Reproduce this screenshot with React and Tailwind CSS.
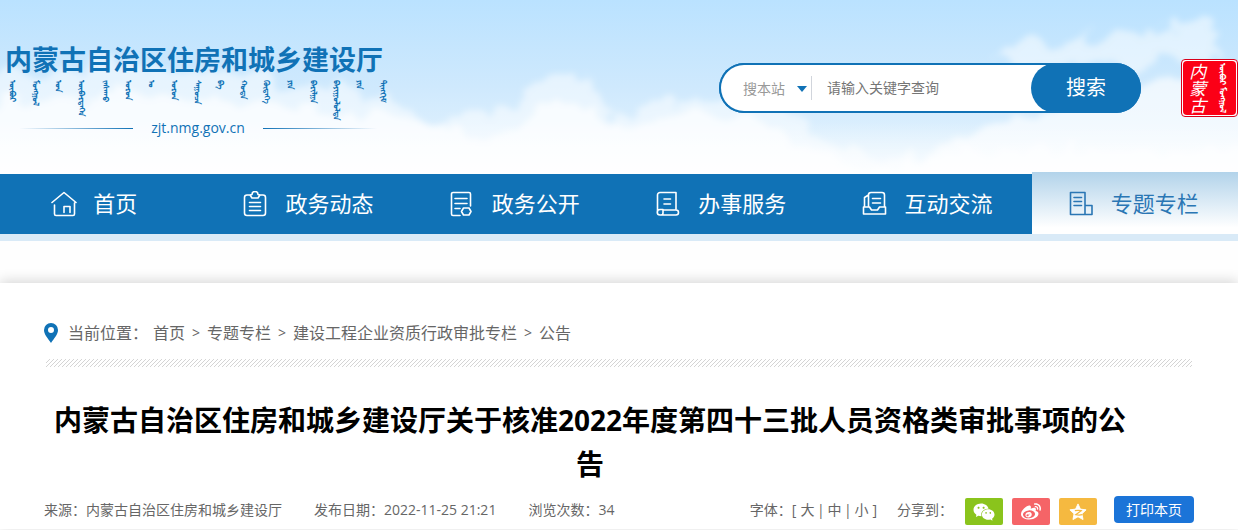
import React, { useState } from 'react';
import { FaWeibo } from 'react-icons/fa';
import { AiFillWechat } from 'react-icons/ai';

const MONGOLIAN_NAME = [
  'ᠥᠪᠥᠷ', 'ᠮᠣᠩᠭᠣᠯ', 'ᠤᠨ', 'ᠥᠪᠡᠷᠲᠡᠭᠡᠨ', 'ᠵᠠᠰᠠᠬᠤ', 'ᠣᠷᠣᠨ', 'ᠤ', 'ᠣᠷᠣᠨ', 'ᠰᠠᠭᠤᠴᠠ',
  'ᠪᠠ', 'ᠬᠣᠲᠠ', 'ᠬᠥᠳᠡᠭᠡ', 'ᠶᠢᠨ', 'ᠪᠠᠷᠢᠯᠭᠠ', 'ᠪᠠᠶᠢᠭᠤᠯᠤᠯᠲᠠ', 'ᠶᠢᠨ', 'ᠲᠢᠩᠬᠢᠮ',
];

function NavIcon({ children }) {
  return (
    <svg viewBox="0 0 26 26" className="h-[26px] w-[26px] shrink-0" fill="none" stroke="currentColor" strokeWidth="1.6" strokeLinejoin="round" strokeLinecap="round">
      {children}
    </svg>
  );
}

const NAV_ITEMS = [
  {
    label: '首页',
    icon: <path d="M1 11.5 13 1.5l12 10M3.5 14v9a1.5 1.5 0 0 0 1.5 1.5h17a1.5 1.5 0 0 0 1.5-1.5V12M13 21.5v-6h6v6" />,
  },
  {
    label: '政务动态',
    icon: <path d="M7 4H4a2.5 2.5 0 0 0-2.5 2.5V22A2.5 2.5 0 0 0 4 24.5h16a2.5 2.5 0 0 0 2.5-2.5V6.5A2.5 2.5 0 0 0 20 4h-3M7 4l2 3h6l2-3-2-.5a3 3 0 0 0-6 0zM6.5 11.5h11M6.5 15.5h11M6.5 19.5h11" />,
  },
  {
    label: '政务公开',
    icon: (
      <>
        <path d="M10 24.5H3A1.5 1.5 0 0 1 1.5 23V3A1.5 1.5 0 0 1 3 1.5h16A1.5 1.5 0 0 1 20.5 3v12M5 7.5h12M5 12.5h12M5 17.5h5" />
        <path d="M13.5 17h5.5l2 3.500-2 3.500h-5.500l-2-3.500z" />
      </>
    ),
  },
  {
    label: '办事服务',
    icon: <path d="M1.500 21V4A2.500 2.500 0 0 1 4 1.500h16V18M8 8h6.500M8 13h6.500M4 18.500h3V22a2 2 0 0 1-2 2H4a2.500 2.500 0 0 1 0-5.500M7 19h13a2.500 2.500 0 0 1 0 5H4" />,
  },
  {
    label: '互动交流',
    icon: <path d="M6.500 16V4A2.500 2.500 0 0 1 9 1.500h11A2.500 2.500 0 0 1 22.500 4v12M2.500 16V6.500l4-2.500M10.500 7.500h8M10.500 12h8M1.500 16h6l2 3h6l2-3h6v7h-22z" />,
  },
  {
    label: '专题专栏',
    active: true,
    icon: <path d="M16 23.500H1.500v-22H16v22h7v-9h-7M5 6.500h7.500M5 10.500h7.500M5 14.500h7.500" />,
  },
];

const CRUMBS = ['首页', '专题专栏', '建设工程企业资质行政审批专栏', '公告'];

function Sky() {
  return (
    <svg className="absolute inset-0 h-full w-full" viewBox="0 0 1238 174" preserveAspectRatio="none" aria-hidden="true">
      <defs>
        <linearGradient id="sky" x1="0" y1="0" x2="0" y2="1">
          <stop offset="0" stopColor="#bae2ff" />
          <stop offset="0.5" stopColor="#cfe9fd" />
          <stop offset="1" stopColor="#e8f5fe" />
        </linearGradient>
        <linearGradient id="haze" x1="0" y1="0" x2="0" y2="1">
          <stop offset="0.7" stopColor="#fff" stopOpacity="0" />
          <stop offset="1" stopColor="#fff" stopOpacity="0.8" />
        </linearGradient>
        <filter id="puff" x="-10%" y="-30%" width="120%" height="160%">
          <feTurbulence type="fractalNoise" baseFrequency="0.04" numOctaves="4" seed="3" result="n" />
          <feDisplacementMap in="SourceGraphic" in2="n" scale="34" xChannelSelector="R" yChannelSelector="G" />
          <feGaussianBlur stdDeviation="3" />
        </filter>
      </defs>
      <rect width="1238" height="174" fill="url(#sky)" />
      <g filter="url(#puff)" fill="#fff">
        <path fillOpacity="0.5" d="M-20 72 60 76 110 52 150 74 230 68 300 86 390 98 430 122 510 106 530 92 550 76 575 74 595 86 615 118 650 102 680 98 720 100 790 112 830 140 880 162 960 150 1260 150V200H-20z" />
        <path fillOpacity="0.65" d="M-20 104 120 94 300 108 400 116 500 138 550 104 580 104 620 130 680 112 760 120 820 152 900 174 940 146 990 124 1060 112 1120 92 1150 84 1185 80 1260 76V200H-20z" />
        <path fillOpacity="0.5" d="M990 62 1010 48 1030 42 1050 50 1080 36 1130 34 1170 24 1200 14 1214 24 1216 50 1180 60 1120 68 1040 66z" />
      </g>
      <rect width="1238" height="174" fill="url(#haze)" />
    </svg>
  );
}

function Logo() {
  return (
    <div className="w-[390px] text-[#1072b6]">
      <h1 className="pl-0.5 text-[27px] leading-9 font-bold">
        <a href="#home">内蒙古自治区住房和城乡建设厅</a>
      </h1>
      <div className="mt-0.5 flex h-9 items-start justify-between px-1 text-[8px] leading-3 font-bold" lang="mn-Mong">
        {MONGOLIAN_NAME.map((word, i) => (
          <span key={i} className="[writing-mode:vertical-lr]">{word}</span>
        ))}
      </div>
      <div className="flex items-center gap-[18px] px-4 text-sm leading-6">
        <span className="h-px flex-1 bg-linear-to-r from-transparent to-[#1072b6]" />
        <span>zjt.nmg.gov.cn</span>
        <span className="h-px flex-1 bg-linear-to-l from-transparent to-[#1072b6]" />
      </div>
    </div>
  );
}

function SearchForm() {
  const [keyword, setKeyword] = useState('');

  return (
    <form onSubmit={(e) => e.preventDefault()} className="flex h-[50px] w-[422px] items-stretch rounded-full bg-[#1072b6]">
      <div className="-mr-6 flex flex-1 items-center rounded-l-full border-2 border-r-0 border-[#1072b6] bg-white pl-[22px]">
        <div className="relative h-6 border-r border-gray-300">
          <select aria-label="搜索范围" className="h-6 w-[68px] appearance-none bg-transparent text-sm leading-6 text-[#999] outline-none">
            <option>搜本站</option>
          </select>
          <svg viewBox="0 0 10 6" className="pointer-events-none absolute right-1 top-[10px] h-[6px] w-[10px]" fill="#1072b6">
            <path d="M0 0h10L5 6z" />
          </svg>
        </div>
        <input
          type="text"
          aria-label="关键字"
          value={keyword}
          onChange={(e) => setKeyword(e.target.value)}
          placeholder="请输入关键字查询"
          className="w-48 px-[15px] text-sm outline-none placeholder:text-[#757575]"
        />
      </div>
      <button type="submit" className="relative w-[110px] rounded-full bg-[#1072b6] text-xl text-white">搜索</button>
    </form>
  );
}

function Seal() {
  return (
    <div className="h-[58px] w-[57px] shrink-0 rounded-sm border border-[#d8001a] bg-white p-px">
      <div className="flex h-full items-center justify-around overflow-hidden rounded-sm bg-[#fb0016] text-white">
        <span className="text-[17px] leading-5 italic [writing-mode:vertical-rl]">内蒙古</span>
        <span className="text-[8px] leading-5 font-bold whitespace-nowrap [writing-mode:vertical-lr]" lang="mn-Mong">ᠥᠪᠥᠷ ᠮᠣᠩᠭᠣᠯ</span>
      </div>
    </div>
  );
}

function NavBar() {
  return (
    <nav className="relative grid h-[60px] grid-cols-6 bg-[#1072b6]">
      {NAV_ITEMS.map((item, i) => (
        <a
          key={item.label}
          href={`#nav-${i}`}
          className={`flex items-center justify-center gap-4 text-[22px] ${
            item.active ? '-mt-0.5 bg-linear-to-b from-[#b2d3ea] to-white to-90% pt-0.5 text-[#2a76b4]' : 'text-white'
          } ${i === 0 ? 'pr-[18px]' : 'pr-0.5'}`}
        >
          <NavIcon>{item.icon}</NavIcon>
          <span className="pb-0.5">{item.label}</span>
        </a>
      ))}
    </nav>
  );
}

function Breadcrumb() {
  return (
    <div className="flex items-center text-base leading-6 text-[#666]">
      <svg viewBox="0 0 14 20" className="mr-[10px] h-5 w-[14px]" fill="#1072b6" fillRule="evenodd">
        <path d="M7 0a7 7 0 0 1 7 7c0 4.500-4 8.500-7 13C4 15.500 0 11.500 0 7a7 7 0 0 1 7-7zm0 4a3 3 0 1 0 0 6 3 3 0 0 0 0-6z" />
      </svg>
      <span className="mr-[5px]">当前位置：</span>
      <ol className="flex">
        {CRUMBS.map((crumb, i) => (
          <li key={crumb} className="flex">
            {i > 0 && <span className="w-[22px] text-center text-sm leading-6">&gt;</span>}
            <a href={`#crumb-${i}`}>{crumb}</a>
          </li>
        ))}
      </ol>
    </div>
  );
}

function HatchedRule() {
  return (
    <svg className="mt-[14px] block h-2 w-full px-0.5" aria-hidden="true">
      <defs>
        <pattern id="hatch" width="4" height="4" patternUnits="userSpaceOnUse">
          <path d="M-1 1 1-1M0 4 4 0M3 5 5 3" stroke="#d4d4d4" strokeWidth="1" />
        </pattern>
      </defs>
      <rect width="100%" height="8" fill="url(#hatch)" />
    </svg>
  );
}

function ShareButtons() {
  return (
    <div className="flex gap-[9px] pt-1 text-white">
      <button type="button" aria-label="微信" className="flex h-[27px] w-[38px] items-center justify-center rounded-xs bg-[#8ac41c]">
        <AiFillWechat size={24} />
      </button>
      <button type="button" aria-label="微博" className="flex h-[27px] w-[38px] items-center justify-center rounded-xs bg-[#f56467]">
        <FaWeibo size={20} />
      </button>
      <button type="button" aria-label="QQ空间" className="flex h-[27px] w-[38px] items-center justify-center rounded-xs bg-[#f5b940]">
        <svg viewBox="0 0 20 20" className="h-[18px] w-[18px]">
          <path fill="#fff" stroke="#fff" strokeLinejoin="round" d="m10 1 2.700 5.800 6.300.8-4.600 4.400 1.200 6.400L10 15.300l-5.600 3.100L5.600 12 1 7.600l6.300-.8z" />
          <path fill="none" stroke="#f5b940" strokeWidth="1.400" d="M6.500 8.500q4-.8 7 0l-6 4.500q3.500.8 7.500 0" />
        </svg>
      </button>
    </div>
  );
}

function ArticleMeta() {
  return (
    <div className="flex items-center justify-between text-sm leading-5 text-[#666]">
      <div className="flex gap-8">
        <span>来源：内蒙古自治区住房和城乡建设厅</span>
        <span>发布日期：2022-11-25 21:21</span>
        <span>浏览次数：34</span>
      </div>
      <div className="flex items-center">
        <div className="mr-5 flex gap-1">
          <span className="-mr-1">字体：</span>
          <span>[</span>
          <button type="button">大</button>
          <span className="flex w-[5px] justify-center">|</span>
          <button type="button">中</button>
          <span className="flex w-[5px] justify-center">|</span>
          <button type="button">小</button>
          <span>]</span>
        </div>
        <span className="mr-3">分享到：</span>
        <ShareButtons />
        <button type="button" className="ml-[17px] h-[27px] w-20 rounded-sm bg-[#1b74d8] text-sm text-white">打印本页</button>
      </div>
    </div>
  );
}

export default function App() {
  return (
    <div className="min-h-screen bg-[#fefefe] font-['Open_Sans','Noto_Sans_CJK_SC',sans-serif]">
      <header className="relative">
        <Sky />
        <div className="relative flex h-[174px] items-start justify-between pl-[3px]">
          <div className="pt-[42px]">
            <Logo />
          </div>
          <div className="flex items-center gap-10 pt-[59px]">
            <SearchForm />
            <Seal />
          </div>
        </div>
      </header>
      <NavBar />
      <div className="h-[7px] bg-[#d9eaf7]" />

      <main className="mt-[42px] bg-white px-11 pt-[38px] pb-1 shadow-[0_-2px_12px_rgba(0,0,0,0.16)]">
        <Breadcrumb />
        <HatchedRule />
        <h2 className="mr-[58px] mt-[31px] text-center text-[28px] leading-[44px] font-bold text-black">
          内蒙古自治区住房和城乡建设厅关于核准2022年度第四十三批人员资格类审批事项的公告
        </h2>
        <div className="mt-2">
          <ArticleMeta />
        </div>
      </main>
    </div>
  );
}
